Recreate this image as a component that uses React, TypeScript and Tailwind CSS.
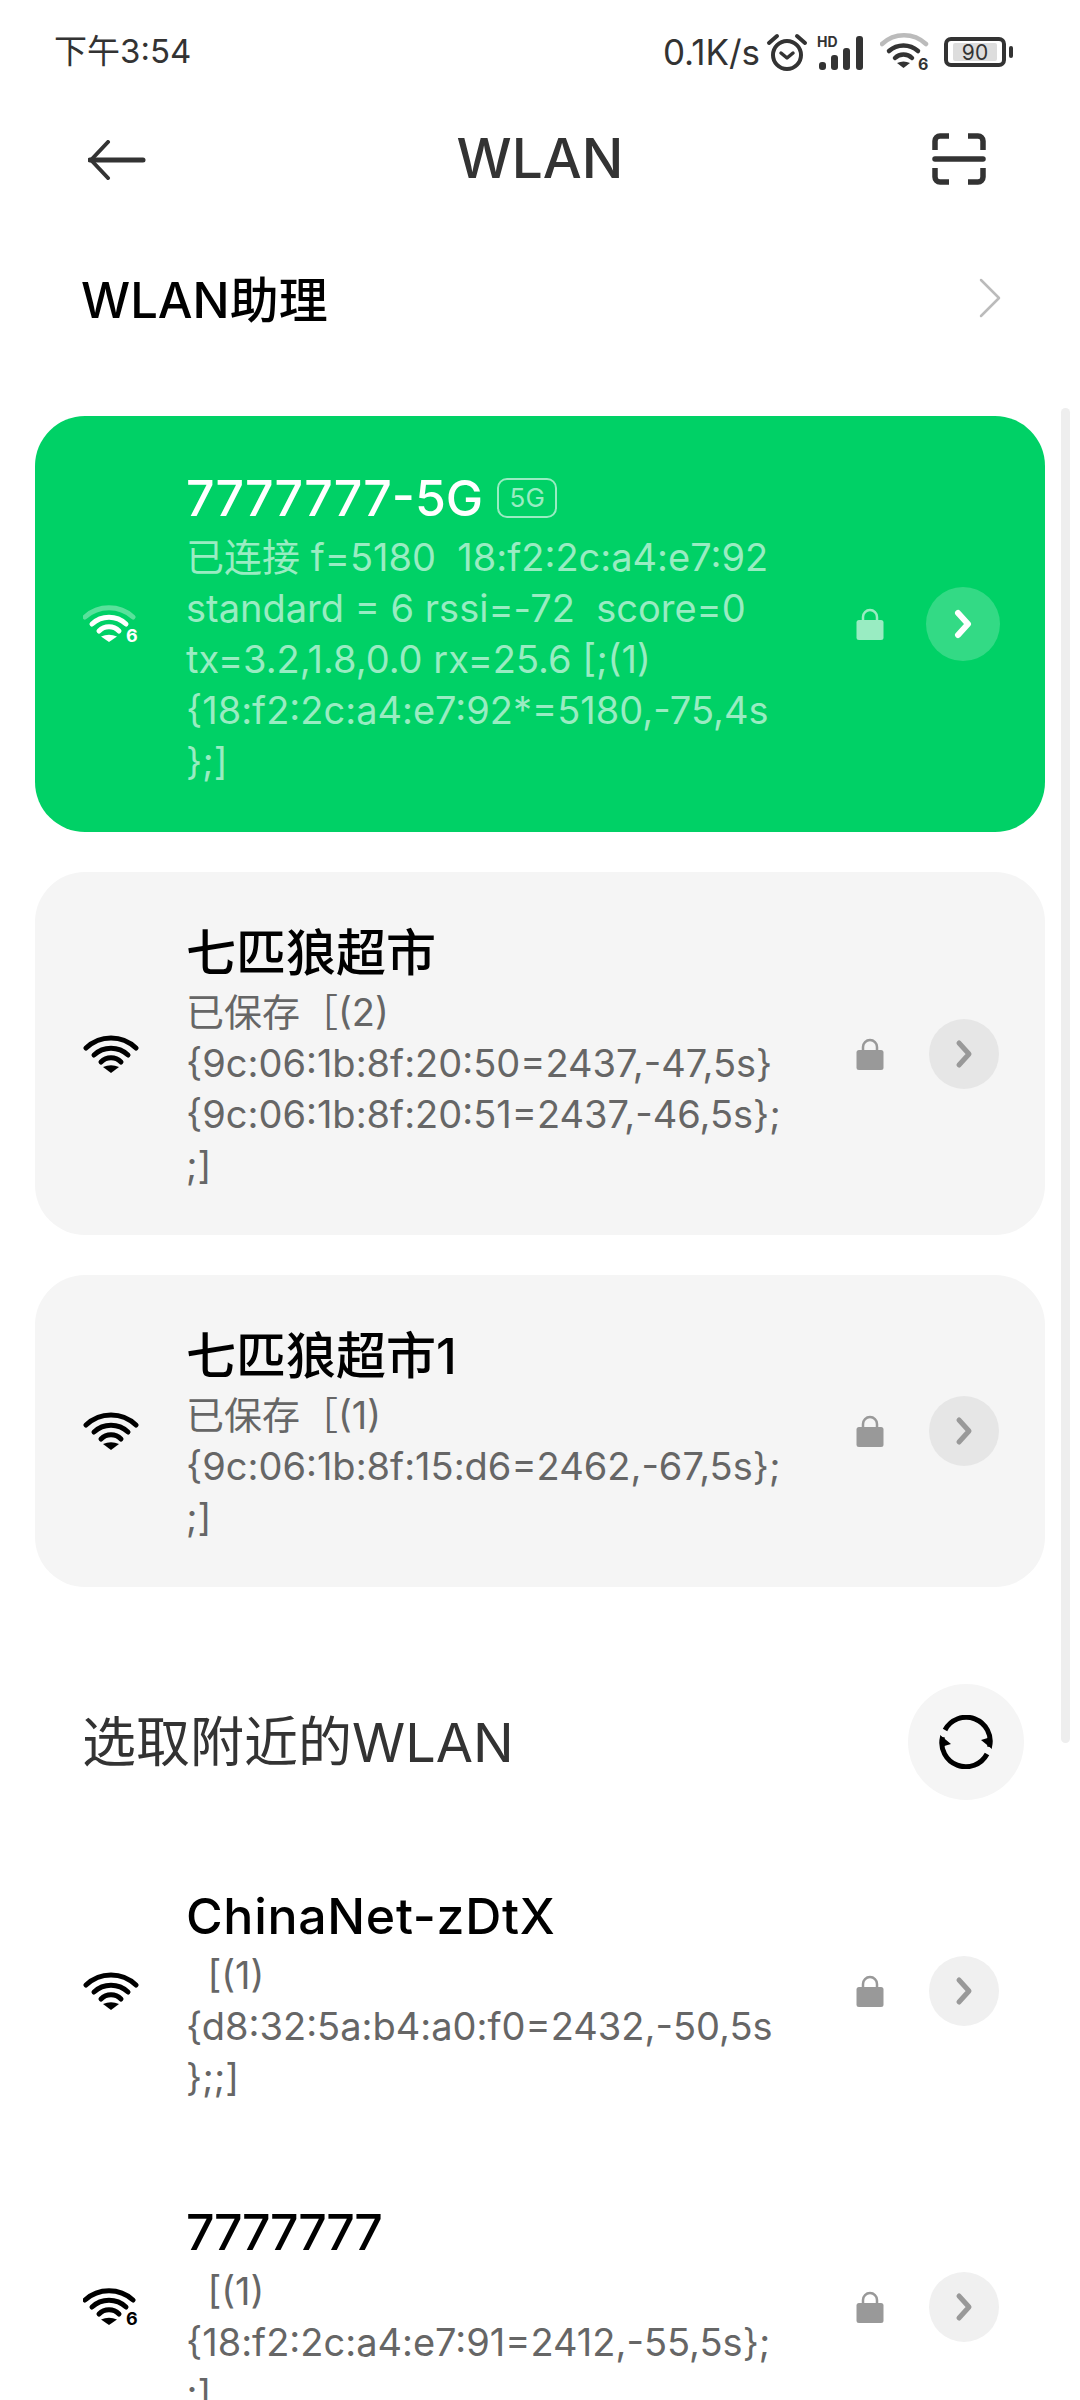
const F = { fontFamily: 'Inter, "Noto Sans CJK SC", sans-serif' };

function Wifi({ color = "#000", six = false, faded = false }: { color?: string; six?: boolean; faded?: boolean }) {
  return (
    <svg width="56" height="48" viewBox="0 -4 56 48" fill="none">
      {six ? (
        <>
          <path d="M2 13 A36 36 0 0 1 50 13" stroke={color} strokeOpacity={faded ? 0.35 : 1} strokeWidth="5" strokeLinecap="round" />
          <path d="M9 20 A25 25 0 0 1 43 20" stroke={color} strokeWidth="5" strokeLinecap="round" />
          <path d="M16 27 A14 14 0 0 1 36 27" stroke={color} strokeWidth="5" strokeLinecap="round" />
          <path d="M26 38 L18 32.5 Q26 29 34 32.5Z" fill={color} />
          <text x="43" y="38" fontSize="18" fontWeight="700" fill={color} fontFamily="Inter, sans-serif">6</text>
        </>
      ) : (
        <>
          <path d="M3 14 A36 36 0 0 1 53 14" stroke={color} strokeWidth="5" strokeLinecap="round" />
          <path d="M11 21 A25 25 0 0 1 45 21" stroke={color} strokeWidth="5" strokeLinecap="round" />
          <path d="M18 28 A14 14 0 0 1 38 28" stroke={color} strokeWidth="5" strokeLinecap="round" />
          <path d="M28 39 L20 33 Q28 29.5 36 33Z" fill={color} />
        </>
      )}
    </svg>
  );
}

function Lock({ color }: { color: string }) {
  return (
    <svg width="28" height="32" viewBox="0 0 28 32" fill="none">
      <path d="M7 14 V9 a7 7 0 0 1 14 0 V14" stroke={color} strokeWidth="2.5" />
      <rect x="0.5" y="12" width="27" height="20" rx="2.5" fill={color} />
    </svg>
  );
}

function Chev({ color, w = 4 }: { color: string; w?: number }) {
  return (
    <svg width="20" height="30" viewBox="0 0 20 30" fill="none">
      <path d="M5 4 L15 15 L5 26" stroke={color} strokeWidth={w} strokeLinecap="round" strokeLinejoin="round" />
    </svg>
  );
}

type RowProps = {
  title: React.ReactNode;
  lines: string[];
  six?: boolean;
  card?: boolean;
};

function Row({ title, lines, six, card }: RowProps) {
  return (
    <div className={`mx-[35px] flex items-center pb-[44px] pt-[47px] ${card ? "rounded-[50px] bg-[#f5f5f5]" : ""}`}>
      <div className="mb-[3px] w-[151px] shrink-0 pl-[48px]">
        <Wifi six={six} />
      </div>
      <div className="w-[670px] shrink-0">
        <div className="h-[68px] text-[50px] font-medium leading-[68px] text-black">{title}</div>
        {lines.map((l, i) => (
          <div key={i} className="h-[51px] whitespace-pre text-[38px] leading-[51px] text-[#666666]">{l}</div>
        ))}
      </div>
      <div className="mb-[3px] flex w-[28px] shrink-0 items-center justify-center"><Lock color="#999999" /></div>
      <div className={`mb-[3px] ml-[45px] flex h-[70px] w-[70px] shrink-0 items-center justify-center rounded-full ${card ? "bg-[#e6e6e6]" : "bg-[#f0f0f0]"}`}>
        <Chev color="#999999" w={5} />
      </div>
    </div>
  );
}

export default function App() {
  return (
    <div className="relative h-[2400px] w-[1080px] overflow-hidden bg-white" style={F}>
      <div className="flex h-[104px] items-center justify-between pl-[54px] pr-[74px] text-[#333333]">
        <div className="text-[33px]">下午3:54</div>
        <div className="flex items-center">
          <span className="text-[35px]">0.1K/s</span>
          <svg className="ml-[6px]" width="42" height="42" viewBox="0 0 42 42" fill="none">
            <circle cx="21" cy="24" r="14" stroke="#333" strokeWidth="4" />
            <path d="M15 22 L21 27 L27 22" stroke="#333" strokeWidth="3.5" strokeLinecap="round" strokeLinejoin="round" />
            <path d="M3 12 L11 5 M39 12 L31 5" stroke="#333" strokeWidth="4" strokeLinecap="round" />
          </svg>
          <svg className="ml-[9px]" width="52" height="36" viewBox="0 0 52 36" fill="none">
            <text x="0" y="13" fontSize="14" fontWeight="700" fill="#333" fontFamily="Inter, sans-serif">HD</text>
            <rect x="2" y="28" width="7" height="8" rx="3" fill="#333" />
            <rect x="14" y="21" width="7" height="15" rx="3" fill="#333" />
            <rect x="26" y="14" width="7" height="22" rx="3" fill="#333" />
            <rect x="39" y="2" width="7" height="34" rx="3" fill="#333" />
          </svg>
          <svg className="ml-[11px]" width="52" height="48" viewBox="0 -4 52 48" fill="none">
            <path d="M2 12 A32 32 0 0 1 46 12" stroke="#bbbbbb" strokeWidth="4.5" strokeLinecap="round" />
            <path d="M9 19 A22 22 0 0 1 38 19" stroke="#333" strokeWidth="4.5" strokeLinecap="round" />
            <path d="M15 26 A12 12 0 0 1 32 26" stroke="#333" strokeWidth="4.5" strokeLinecap="round" />
            <path d="M23.5 36 L17 31 Q23.5 28 30 31Z" fill="#333" />
            <text x="38" y="38" fontSize="16" fontWeight="700" fill="#333" fontFamily="Inter, sans-serif">6</text>
          </svg>
          <div className="relative ml-[12px] flex h-[30px] w-[62px] items-center justify-center rounded-[7px] border-[4px] border-[#333333]">
            <div className="flex h-[18px] w-[44px] items-center justify-center rounded-[2px] bg-[#dddddd] text-[21px] leading-none">90</div>
            <div className="absolute right-[-11px] h-[12px] w-[4px] rounded-full bg-[#333333]" />
          </div>
        </div>
      </div>

      <div className="relative flex h-[108px] items-center justify-center">
        <svg className="absolute left-[88px] top-[36px]" width="60" height="40" viewBox="0 0 60 40" fill="none">
          <path d="M2 20 H55" stroke="#333" strokeWidth="5" strokeLinecap="round" />
          <path d="M20 2 L3 20 L20 38" stroke="#333" strokeWidth="4" strokeLinecap="round" strokeLinejoin="round" />
        </svg>
        <div className="text-[55px] font-medium text-[#333333]">WLAN</div>
        <svg className="absolute left-[932px] top-[29px]" width="54" height="52" viewBox="0 0 54 52" fill="none">
          <path d="M3 17 V8 a5 5 0 0 1 5 -5 H17 M36 3 H46 a5 5 0 0 1 5 5 V17 M3 35 V44 a5 5 0 0 0 5 5 H17 M36 49 H46 a5 5 0 0 0 5 -5 V35" stroke="#333" strokeWidth="5.5" />
          <path d="M3 26 H51" stroke="#333" strokeWidth="5.5" strokeLinecap="round" />
        </svg>
      </div>

      <div className="flex h-[172px] items-center justify-between pl-[81px] pr-[78px]">
        <div className="mt-[6px] text-[49px] font-medium text-black">WLAN助理</div>
        <svg width="24" height="40" viewBox="0 0 24 40" fill="none">
          <path d="M3 2 L21 20 L3 38" stroke="#bbbbbb" strokeWidth="2.5" strokeLinecap="round" strokeLinejoin="round" />
        </svg>
      </div>

      <div className="mx-[35px] mt-[32px] flex items-center rounded-[50px] bg-[#00d166] pb-[45px] pt-[48px]">
        <div className="mb-[3px] w-[151px] shrink-0 pl-[48px]">
          <Wifi color="#ffffff" six faded />
        </div>
        <div className="w-[670px] shrink-0">
          <div className="flex h-[68px] items-center text-[50px] font-medium leading-[68px] text-white">
            7777777-5G
            <span className="ml-[14px] flex h-[40px] w-[60px] items-center justify-center rounded-[10px] border-[2px] border-[#99ecc2] text-[26px] font-normal text-[#99ecc2]">5G</span>
          </div>
          {["已连接 f=5180  18:f2:2c:a4:e7:92", "standard = 6 rssi=-72  score=0", "tx=3.2,1.8,0.0 rx=25.6 [;(1)", "{18:f2:2c:a4:e7:92*=5180,-75,4s", "};]"].map((l, i) => (
            <div key={i} className="h-[51px] whitespace-pre text-[38px] leading-[51px] text-[#99ecc2]">{l}</div>
          ))}
        </div>
        <div className="mb-[3px] flex w-[28px] shrink-0 items-center justify-center"><Lock color="#99ecc2" /></div>
        <div className="mb-[3px] ml-[42px] flex h-[74px] w-[74px] shrink-0 items-center justify-center rounded-full bg-[#33da85]">
          <Chev color="#ffffff" w={6} />
        </div>
      </div>

      <div className="mt-[40px]">
        <Row card title="七匹狼超市" lines={["已保存［(2)", "{9c:06:1b:8f:20:50=2437,-47,5s}", "{9c:06:1b:8f:20:51=2437,-46,5s};", ";]"]} />
      </div>
      <div className="mt-[40px]">
        <Row card title="七匹狼超市1" lines={["已保存［(1)", "{9c:06:1b:8f:15:d6=2462,-67,5s};", ";]"]} />
      </div>

      <div className="mt-[97px] flex h-[116px] items-center justify-between pl-[82px] pr-[56px]">
        <div className="text-[54px] text-[#333333]">选取附近的WLAN</div>
        <div className="flex h-[116px] w-[116px] items-center justify-center rounded-full bg-[#f5f5f5]">
          <svg width="54" height="54" viewBox="0 0 54 54" fill="none">
            <path d="M48 39 A24 24 0 0 1 3.5 22" stroke="#000" strokeWidth="5" />
            <path d="M6 15 A24 24 0 0 1 50.5 32" stroke="#000" strokeWidth="5" />
            <path d="M1 20 L12 29 L2 32Z M53 34 L42 25 L52 22Z" fill="#000" />
          </svg>
        </div>
      </div>

      <div className="mt-[35px] flex flex-col gap-[4px]">
        <Row title={<span className="tracking-[0.7px]">ChinaNet-zDtX</span>} lines={["  [(1)", "{d8:32:5a:b4:a0:f0=2432,-50,5s", "};;]"]} />
        <Row six title={<span className="tracking-[-1.5px]">7777777</span>} lines={["  [(1)", "{18:f2:2c:a4:e7:91=2412,-55,5s};", ";]"]} />
      </div>

      <div className="absolute left-[1061px] top-[408px] h-[1335px] w-[9px] rounded-full bg-[#eeeeee]" />
    </div>
  );
}
